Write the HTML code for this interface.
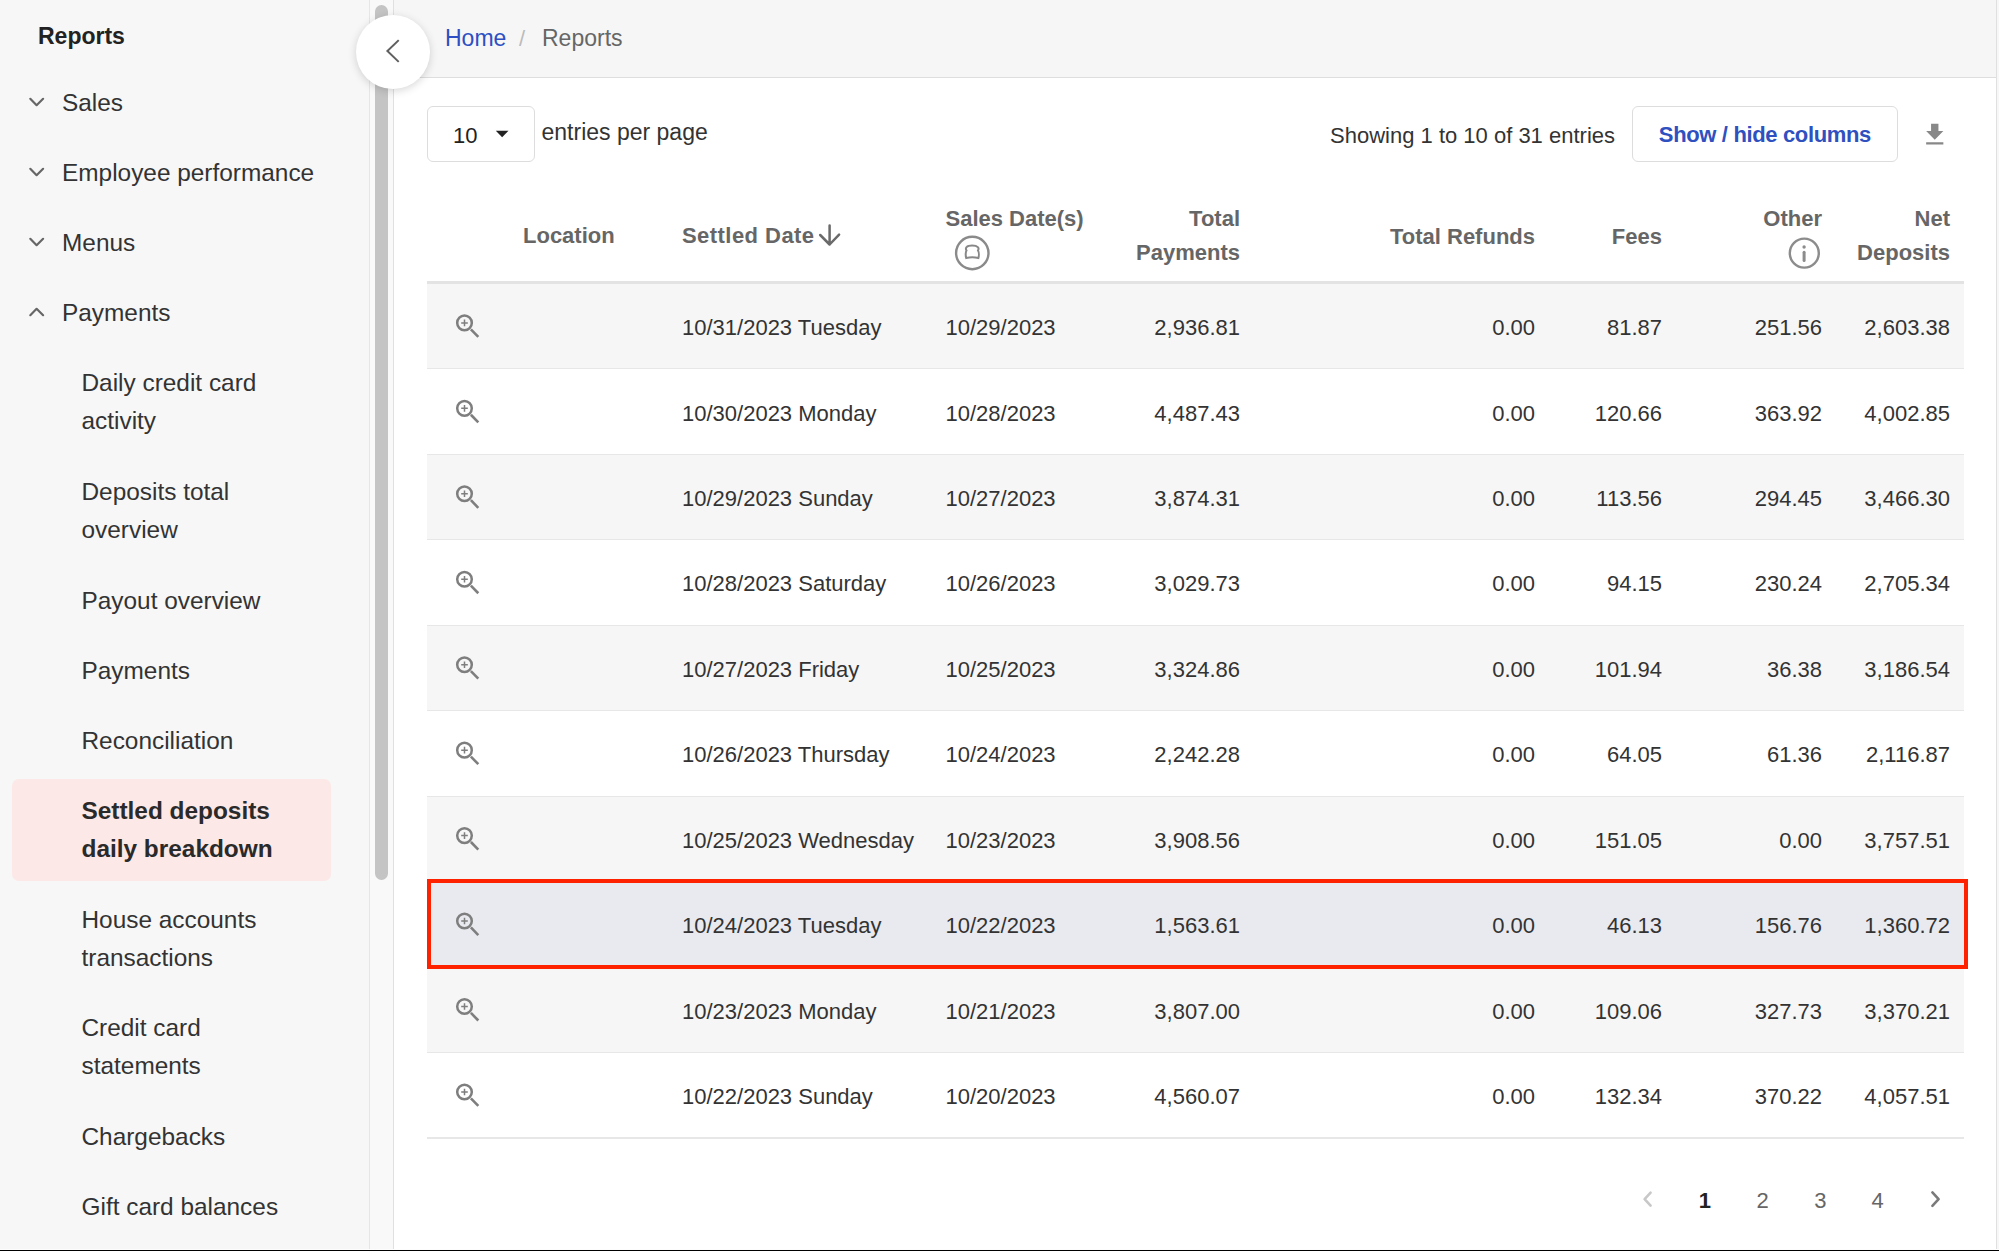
<!DOCTYPE html>
<html><head><meta charset="utf-8"><title>Reports</title>
<style>
html,body{margin:0;padding:0;}
body{width:1999px;height:1251px;position:relative;overflow:hidden;background:#fff;font-family:"Liberation Sans",sans-serif;}
.t{position:absolute;white-space:nowrap;}
.r{position:absolute;display:block;}
</style></head><body>
<div class="r" style="left:0px;top:0px;width:369px;height:1251px;background:#f7f7f7;"></div>
<div class="r" style="left:369px;top:0px;width:1px;height:1251px;background:#e6e6e6;"></div>
<div class="r" style="left:370px;top:0px;width:23px;height:1251px;background:#f9f9f9;"></div>
<div class="r" style="left:375px;top:5px;width:13px;height:875px;background:#c4c4c4;border-radius:6.5px;"></div>
<div class="r" style="left:393px;top:0px;width:1px;height:1251px;background:#e0e0e0;"></div>
<div class="t" style="top:20.03px;font-size:23px;line-height:32px;font-weight:700;color:#222;left:38px;">Reports</div>
<div class="t" style="top:85.55px;font-size:24.4px;line-height:34px;font-weight:400;color:#333;left:62px;">Sales</div>
<svg class="r" style="left:0;top:82px" width="60" height="40" viewBox="0 82 60 40"><path d="M30.3 98.8 L36.6 105.2 L43.1 98.8" fill="none" stroke="#666" stroke-width="2.2" stroke-linecap="round" stroke-linejoin="round"/></svg>
<div class="t" style="top:155.55px;font-size:24.4px;line-height:34px;font-weight:400;color:#333;left:62px;">Employee performance</div>
<svg class="r" style="left:0;top:152px" width="60" height="40" viewBox="0 152 60 40"><path d="M30.3 168.8 L36.6 175.2 L43.1 168.8" fill="none" stroke="#666" stroke-width="2.2" stroke-linecap="round" stroke-linejoin="round"/></svg>
<div class="t" style="top:225.55px;font-size:24.4px;line-height:34px;font-weight:400;color:#333;left:62px;">Menus</div>
<svg class="r" style="left:0;top:222px" width="60" height="40" viewBox="0 222 60 40"><path d="M30.3 238.8 L36.6 245.2 L43.1 238.8" fill="none" stroke="#666" stroke-width="2.2" stroke-linecap="round" stroke-linejoin="round"/></svg>
<div class="t" style="top:295.55px;font-size:24.4px;line-height:34px;font-weight:400;color:#333;left:62px;">Payments</div>
<svg class="r" style="left:0;top:292px" width="60" height="40" viewBox="0 292 60 40"><path d="M30.3 315.2 L36.6 308.8 L43.1 315.2" fill="none" stroke="#666" stroke-width="2.2" stroke-linecap="round" stroke-linejoin="round"/></svg>
<div class="r" style="left:11.5px;top:779px;width:319.5px;height:102px;background:#fce8e6;border-radius:7px;"></div>
<div class="t" style="top:365.55px;font-size:24.4px;line-height:34px;font-weight:400;color:#333;left:81.5px;">Daily credit card</div>
<div class="t" style="top:403.55px;font-size:24.4px;line-height:34px;font-weight:400;color:#333;left:81.5px;">activity</div>
<div class="t" style="top:474.55px;font-size:24.4px;line-height:34px;font-weight:400;color:#333;left:81.5px;">Deposits total</div>
<div class="t" style="top:512.55px;font-size:24.4px;line-height:34px;font-weight:400;color:#333;left:81.5px;">overview</div>
<div class="t" style="top:583.55px;font-size:24.4px;line-height:34px;font-weight:400;color:#333;left:81.5px;">Payout overview</div>
<div class="t" style="top:653.55px;font-size:24.4px;line-height:34px;font-weight:400;color:#333;left:81.5px;">Payments</div>
<div class="t" style="top:723.55px;font-size:24.4px;line-height:34px;font-weight:400;color:#333;left:81.5px;">Reconciliation</div>
<div class="t" style="top:793.55px;font-size:24.4px;line-height:34px;font-weight:700;color:#2a2a2a;left:81.5px;">Settled deposits</div>
<div class="t" style="top:831.55px;font-size:24.4px;line-height:34px;font-weight:700;color:#2a2a2a;left:81.5px;">daily breakdown</div>
<div class="t" style="top:902.55px;font-size:24.4px;line-height:34px;font-weight:400;color:#333;left:81.5px;">House accounts</div>
<div class="t" style="top:940.55px;font-size:24.4px;line-height:34px;font-weight:400;color:#333;left:81.5px;">transactions</div>
<div class="t" style="top:1010.55px;font-size:24.4px;line-height:34px;font-weight:400;color:#333;left:81.5px;">Credit card</div>
<div class="t" style="top:1048.55px;font-size:24.4px;line-height:34px;font-weight:400;color:#333;left:81.5px;">statements</div>
<div class="t" style="top:1119.55px;font-size:24.4px;line-height:34px;font-weight:400;color:#333;left:81.5px;">Chargebacks</div>
<div class="t" style="top:1189.55px;font-size:24.4px;line-height:34px;font-weight:400;color:#333;left:81.5px;">Gift card balances</div>
<div class="r" style="left:394px;top:0px;width:1602px;height:77px;background:#f6f6f6;"></div>
<div class="r" style="left:394px;top:77px;width:1602px;height:1px;background:#dedede;"></div>
<div class="r" style="left:1996px;top:0px;width:1px;height:1251px;background:#e0e0e0;"></div>
<div class="r" style="left:1997px;top:0px;width:2px;height:1251px;background:#f7f7f7;"></div>
<div class="t" style="top:21.73px;font-size:23px;line-height:32px;font-weight:400;color:#2d4fc3;left:445px;">Home</div>
<div class="t" style="top:22.88px;font-size:22px;line-height:31px;font-weight:400;color:#bbbbbb;left:519px;">/</div>
<div class="t" style="top:21.73px;font-size:23px;line-height:32px;font-weight:400;color:#666;left:542px;">Reports</div>
<div class="r" style="left:355.5px;top:14.5px;width:74px;height:74px;background:#fff;border-radius:50%;box-shadow:0 2px 8px rgba(0,0,0,0.16);"></div>
<svg class="r" style="left:355px;top:14px" width="76" height="76" viewBox="355 14 76 76"><path d="M398 40.8 L387.4 51 L398 61.2" fill="none" stroke="#606060" stroke-width="2" stroke-linecap="square"/></svg>
<div class="r" style="left:427px;top:106px;width:108px;height:56px;background:#fff;box-sizing:border-box;border:1.5px solid #dddddd;border-radius:6px;"></div>
<div class="t" style="top:119.88px;font-size:22px;line-height:31px;font-weight:400;color:#222;left:453px;">10</div>
<svg class="r" style="left:494px;top:129px" width="16" height="10" viewBox="494 129 16 10"><path d="M495.8 130.7 L508.5 130.7 L502.15 137.3 Z" fill="#222"/></svg>
<div class="t" style="top:116.03px;font-size:23px;line-height:32px;font-weight:400;color:#333;left:541.5px;">entries per page</div>
<div class="t" style="top:119.88px;font-size:22px;line-height:31px;font-weight:400;color:#333;right:384px;text-align:right;">Showing 1 to 10 of 31 entries</div>
<div class="r" style="left:1632px;top:106px;width:266px;height:56px;background:#fff;box-sizing:border-box;border:1.5px solid #dddddd;border-radius:6px;"></div>
<div class="t" style="top:119.38px;font-size:22px;line-height:31px;font-weight:700;color:#2f50bf;letter-spacing:-0.35px;right:128px;text-align:right;">Show / hide columns</div>
<svg class="r" style="left:1920.3px;top:119.9px" width="29.5" height="29.5" viewBox="0 0 24 24"><path d="M19 9h-4V3H9v6H5l7 7 7-7zM5 18v2h14v-2H5z" fill="#888"/></svg>
<div class="t" style="top:220.18px;font-size:22px;line-height:31px;font-weight:700;color:#666;left:523px;">Location</div>
<div class="t" style="top:220.18px;font-size:22px;line-height:31px;font-weight:700;color:#666;letter-spacing:0.45px;left:682px;">Settled Date</div>
<svg class="r" style="left:815px;top:220px" width="30" height="30" viewBox="815 220 30 30"><path d="M829.6 225.5 V244 M820.2 235 L829.6 244.5 L839.1 234.7" fill="none" stroke="#6a6a6a" stroke-width="2.5" stroke-linecap="round" stroke-linejoin="round"/></svg>
<div class="t" style="top:203.38px;font-size:22px;line-height:31px;font-weight:700;color:#666;left:945.5px;">Sales Date(s)</div>
<svg class="r" style="left:950px;top:231px" width="45" height="45" viewBox="950 231 45 45"><circle cx="972.3" cy="253" r="16.2" fill="none" stroke="#8a8a8a" stroke-width="2.4"/><path d="M966.5 250.5 C965 248 966.3 245.6 972.2 245.6 C978.1 245.6 979.4 248 978 250.5 C979 252 979 256 978.4 258 C975 257.3 969.5 257.3 966.2 258 C965.5 256 965.5 252 966.5 250.5 Z" fill="none" stroke="#888" stroke-width="2"/></svg>
<div class="t" style="top:203.38px;font-size:22px;line-height:31px;font-weight:700;color:#666;right:759px;text-align:right;">Total</div>
<div class="t" style="top:236.88px;font-size:22px;line-height:31px;font-weight:700;color:#666;right:759px;text-align:right;">Payments</div>
<div class="t" style="top:220.68px;font-size:22px;line-height:31px;font-weight:700;color:#666;right:464px;text-align:right;">Total Refunds</div>
<div class="t" style="top:220.68px;font-size:22px;line-height:31px;font-weight:700;color:#666;right:337px;text-align:right;">Fees</div>
<div class="t" style="top:202.98px;font-size:22px;line-height:31px;font-weight:700;color:#666;right:177px;text-align:right;">Other</div>
<svg class="r" style="left:1786px;top:235px" width="36" height="36" viewBox="1786 235 36 36"><circle cx="1804.3" cy="253.1" r="14.5" fill="none" stroke="#8c8c8c" stroke-width="2.4"/><circle cx="1804.1" cy="247" r="1.7" fill="#8c8c8c"/><path d="M1804.1 252.3 V260.6" stroke="#8c8c8c" stroke-width="3" stroke-linecap="round"/></svg>
<div class="t" style="top:202.98px;font-size:22px;line-height:31px;font-weight:700;color:#666;right:49px;text-align:right;">Net</div>
<div class="t" style="top:237.48px;font-size:22px;line-height:31px;font-weight:700;color:#666;right:49px;text-align:right;">Deposits</div>
<div class="r" style="left:427px;top:281px;width:1537px;height:3px;background:#e3e3e3;"></div>
<div class="r" style="left:427px;top:284px;width:1537px;height:84px;background:#f6f6f6;"></div>
<div class="r" style="left:427px;top:367.5px;width:1537px;height:2px;background:#e7e7e7;"></div>
<svg class="r" style="left:450px;top:304px" width="36" height="40" viewBox="450 304 36 40"><circle cx="464.5" cy="322.90" r="7.3" fill="none" stroke="#7e7e7e" stroke-width="2.5"/><path d="M461.2 322.90 H467.8 M464.5 319.60 V326.20" stroke="#7e7e7e" stroke-width="1.5"/><path d="M470.9 329.30 L478.3 336.90" stroke="#7e7e7e" stroke-width="2.6"/></svg>
<div class="t" style="top:312.08px;font-size:22px;line-height:31px;font-weight:400;color:#333;left:682px;">10/31/2023 Tuesday</div>
<div class="t" style="top:312.08px;font-size:22px;line-height:31px;font-weight:400;color:#333;left:945.5px;">10/29/2023</div>
<div class="t" style="top:312.08px;font-size:22px;line-height:31px;font-weight:400;color:#333;right:759px;text-align:right;">2,936.81</div>
<div class="t" style="top:312.08px;font-size:22px;line-height:31px;font-weight:400;color:#333;right:464px;text-align:right;">0.00</div>
<div class="t" style="top:312.08px;font-size:22px;line-height:31px;font-weight:400;color:#333;right:337px;text-align:right;">81.87</div>
<div class="t" style="top:312.08px;font-size:22px;line-height:31px;font-weight:400;color:#333;right:177px;text-align:right;">251.56</div>
<div class="t" style="top:312.08px;font-size:22px;line-height:31px;font-weight:400;color:#333;right:49px;text-align:right;">2,603.38</div>
<div class="r" style="left:427px;top:369px;width:1537px;height:85px;background:#ffffff;"></div>
<div class="r" style="left:427px;top:453.5px;width:1537px;height:2px;background:#e7e7e7;"></div>
<svg class="r" style="left:450px;top:389px" width="36" height="40" viewBox="450 389 36 40"><circle cx="464.5" cy="408.35" r="7.3" fill="none" stroke="#7e7e7e" stroke-width="2.5"/><path d="M461.2 408.35 H467.8 M464.5 405.05 V411.65" stroke="#7e7e7e" stroke-width="1.5"/><path d="M470.9 414.75 L478.3 422.35" stroke="#7e7e7e" stroke-width="2.6"/></svg>
<div class="t" style="top:397.53px;font-size:22px;line-height:31px;font-weight:400;color:#333;left:682px;">10/30/2023 Monday</div>
<div class="t" style="top:397.53px;font-size:22px;line-height:31px;font-weight:400;color:#333;left:945.5px;">10/28/2023</div>
<div class="t" style="top:397.53px;font-size:22px;line-height:31px;font-weight:400;color:#333;right:759px;text-align:right;">4,487.43</div>
<div class="t" style="top:397.53px;font-size:22px;line-height:31px;font-weight:400;color:#333;right:464px;text-align:right;">0.00</div>
<div class="t" style="top:397.53px;font-size:22px;line-height:31px;font-weight:400;color:#333;right:337px;text-align:right;">120.66</div>
<div class="t" style="top:397.53px;font-size:22px;line-height:31px;font-weight:400;color:#333;right:177px;text-align:right;">363.92</div>
<div class="t" style="top:397.53px;font-size:22px;line-height:31px;font-weight:400;color:#333;right:49px;text-align:right;">4,002.85</div>
<div class="r" style="left:427px;top:455px;width:1537px;height:84px;background:#f6f6f6;"></div>
<div class="r" style="left:427px;top:538.5px;width:1537px;height:2px;background:#e7e7e7;"></div>
<svg class="r" style="left:450px;top:475px" width="36" height="40" viewBox="450 475 36 40"><circle cx="464.5" cy="493.80" r="7.3" fill="none" stroke="#7e7e7e" stroke-width="2.5"/><path d="M461.2 493.80 H467.8 M464.5 490.50 V497.10" stroke="#7e7e7e" stroke-width="1.5"/><path d="M470.9 500.20 L478.3 507.80" stroke="#7e7e7e" stroke-width="2.6"/></svg>
<div class="t" style="top:482.98px;font-size:22px;line-height:31px;font-weight:400;color:#333;left:682px;">10/29/2023 Sunday</div>
<div class="t" style="top:482.98px;font-size:22px;line-height:31px;font-weight:400;color:#333;left:945.5px;">10/27/2023</div>
<div class="t" style="top:482.98px;font-size:22px;line-height:31px;font-weight:400;color:#333;right:759px;text-align:right;">3,874.31</div>
<div class="t" style="top:482.98px;font-size:22px;line-height:31px;font-weight:400;color:#333;right:464px;text-align:right;">0.00</div>
<div class="t" style="top:482.98px;font-size:22px;line-height:31px;font-weight:400;color:#333;right:337px;text-align:right;">113.56</div>
<div class="t" style="top:482.98px;font-size:22px;line-height:31px;font-weight:400;color:#333;right:177px;text-align:right;">294.45</div>
<div class="t" style="top:482.98px;font-size:22px;line-height:31px;font-weight:400;color:#333;right:49px;text-align:right;">3,466.30</div>
<div class="r" style="left:427px;top:540px;width:1537px;height:85px;background:#ffffff;"></div>
<div class="r" style="left:427px;top:624.5px;width:1537px;height:2px;background:#e7e7e7;"></div>
<svg class="r" style="left:450px;top:560px" width="36" height="40" viewBox="450 560 36 40"><circle cx="464.5" cy="579.25" r="7.3" fill="none" stroke="#7e7e7e" stroke-width="2.5"/><path d="M461.2 579.25 H467.8 M464.5 575.95 V582.55" stroke="#7e7e7e" stroke-width="1.5"/><path d="M470.9 585.65 L478.3 593.25" stroke="#7e7e7e" stroke-width="2.6"/></svg>
<div class="t" style="top:568.43px;font-size:22px;line-height:31px;font-weight:400;color:#333;left:682px;">10/28/2023 Saturday</div>
<div class="t" style="top:568.43px;font-size:22px;line-height:31px;font-weight:400;color:#333;left:945.5px;">10/26/2023</div>
<div class="t" style="top:568.43px;font-size:22px;line-height:31px;font-weight:400;color:#333;right:759px;text-align:right;">3,029.73</div>
<div class="t" style="top:568.43px;font-size:22px;line-height:31px;font-weight:400;color:#333;right:464px;text-align:right;">0.00</div>
<div class="t" style="top:568.43px;font-size:22px;line-height:31px;font-weight:400;color:#333;right:337px;text-align:right;">94.15</div>
<div class="t" style="top:568.43px;font-size:22px;line-height:31px;font-weight:400;color:#333;right:177px;text-align:right;">230.24</div>
<div class="t" style="top:568.43px;font-size:22px;line-height:31px;font-weight:400;color:#333;right:49px;text-align:right;">2,705.34</div>
<div class="r" style="left:427px;top:626px;width:1537px;height:84px;background:#f6f6f6;"></div>
<div class="r" style="left:427px;top:709.5px;width:1537px;height:2px;background:#e7e7e7;"></div>
<svg class="r" style="left:450px;top:646px" width="36" height="40" viewBox="450 646 36 40"><circle cx="464.5" cy="664.70" r="7.3" fill="none" stroke="#7e7e7e" stroke-width="2.5"/><path d="M461.2 664.70 H467.8 M464.5 661.40 V668.00" stroke="#7e7e7e" stroke-width="1.5"/><path d="M470.9 671.10 L478.3 678.70" stroke="#7e7e7e" stroke-width="2.6"/></svg>
<div class="t" style="top:653.88px;font-size:22px;line-height:31px;font-weight:400;color:#333;left:682px;">10/27/2023 Friday</div>
<div class="t" style="top:653.88px;font-size:22px;line-height:31px;font-weight:400;color:#333;left:945.5px;">10/25/2023</div>
<div class="t" style="top:653.88px;font-size:22px;line-height:31px;font-weight:400;color:#333;right:759px;text-align:right;">3,324.86</div>
<div class="t" style="top:653.88px;font-size:22px;line-height:31px;font-weight:400;color:#333;right:464px;text-align:right;">0.00</div>
<div class="t" style="top:653.88px;font-size:22px;line-height:31px;font-weight:400;color:#333;right:337px;text-align:right;">101.94</div>
<div class="t" style="top:653.88px;font-size:22px;line-height:31px;font-weight:400;color:#333;right:177px;text-align:right;">36.38</div>
<div class="t" style="top:653.88px;font-size:22px;line-height:31px;font-weight:400;color:#333;right:49px;text-align:right;">3,186.54</div>
<div class="r" style="left:427px;top:711px;width:1537px;height:85px;background:#ffffff;"></div>
<div class="r" style="left:427px;top:795.5px;width:1537px;height:2px;background:#e7e7e7;"></div>
<svg class="r" style="left:450px;top:731px" width="36" height="40" viewBox="450 731 36 40"><circle cx="464.5" cy="750.15" r="7.3" fill="none" stroke="#7e7e7e" stroke-width="2.5"/><path d="M461.2 750.15 H467.8 M464.5 746.85 V753.45" stroke="#7e7e7e" stroke-width="1.5"/><path d="M470.9 756.55 L478.3 764.15" stroke="#7e7e7e" stroke-width="2.6"/></svg>
<div class="t" style="top:739.33px;font-size:22px;line-height:31px;font-weight:400;color:#333;left:682px;">10/26/2023 Thursday</div>
<div class="t" style="top:739.33px;font-size:22px;line-height:31px;font-weight:400;color:#333;left:945.5px;">10/24/2023</div>
<div class="t" style="top:739.33px;font-size:22px;line-height:31px;font-weight:400;color:#333;right:759px;text-align:right;">2,242.28</div>
<div class="t" style="top:739.33px;font-size:22px;line-height:31px;font-weight:400;color:#333;right:464px;text-align:right;">0.00</div>
<div class="t" style="top:739.33px;font-size:22px;line-height:31px;font-weight:400;color:#333;right:337px;text-align:right;">64.05</div>
<div class="t" style="top:739.33px;font-size:22px;line-height:31px;font-weight:400;color:#333;right:177px;text-align:right;">61.36</div>
<div class="t" style="top:739.33px;font-size:22px;line-height:31px;font-weight:400;color:#333;right:49px;text-align:right;">2,116.87</div>
<div class="r" style="left:427px;top:797px;width:1537px;height:84px;background:#f6f6f6;"></div>
<div class="r" style="left:427px;top:880.5px;width:1537px;height:2px;background:#e7e7e7;"></div>
<svg class="r" style="left:450px;top:817px" width="36" height="40" viewBox="450 817 36 40"><circle cx="464.5" cy="835.60" r="7.3" fill="none" stroke="#7e7e7e" stroke-width="2.5"/><path d="M461.2 835.60 H467.8 M464.5 832.30 V838.90" stroke="#7e7e7e" stroke-width="1.5"/><path d="M470.9 842.00 L478.3 849.60" stroke="#7e7e7e" stroke-width="2.6"/></svg>
<div class="t" style="top:824.78px;font-size:22px;line-height:31px;font-weight:400;color:#333;left:682px;">10/25/2023 Wednesday</div>
<div class="t" style="top:824.78px;font-size:22px;line-height:31px;font-weight:400;color:#333;left:945.5px;">10/23/2023</div>
<div class="t" style="top:824.78px;font-size:22px;line-height:31px;font-weight:400;color:#333;right:759px;text-align:right;">3,908.56</div>
<div class="t" style="top:824.78px;font-size:22px;line-height:31px;font-weight:400;color:#333;right:464px;text-align:right;">0.00</div>
<div class="t" style="top:824.78px;font-size:22px;line-height:31px;font-weight:400;color:#333;right:337px;text-align:right;">151.05</div>
<div class="t" style="top:824.78px;font-size:22px;line-height:31px;font-weight:400;color:#333;right:177px;text-align:right;">0.00</div>
<div class="t" style="top:824.78px;font-size:22px;line-height:31px;font-weight:400;color:#333;right:49px;text-align:right;">3,757.51</div>
<div class="r" style="left:427px;top:882px;width:1537px;height:85px;background:#e9eaef;"></div>
<div class="r" style="left:427px;top:966.5px;width:1537px;height:2px;background:#e7e7e7;"></div>
<svg class="r" style="left:450px;top:902px" width="36" height="40" viewBox="450 902 36 40"><circle cx="464.5" cy="921.05" r="7.3" fill="none" stroke="#7e7e7e" stroke-width="2.5"/><path d="M461.2 921.05 H467.8 M464.5 917.75 V924.35" stroke="#7e7e7e" stroke-width="1.5"/><path d="M470.9 927.45 L478.3 935.05" stroke="#7e7e7e" stroke-width="2.6"/></svg>
<div class="t" style="top:910.23px;font-size:22px;line-height:31px;font-weight:400;color:#333;left:682px;">10/24/2023 Tuesday</div>
<div class="t" style="top:910.23px;font-size:22px;line-height:31px;font-weight:400;color:#333;left:945.5px;">10/22/2023</div>
<div class="t" style="top:910.23px;font-size:22px;line-height:31px;font-weight:400;color:#333;right:759px;text-align:right;">1,563.61</div>
<div class="t" style="top:910.23px;font-size:22px;line-height:31px;font-weight:400;color:#333;right:464px;text-align:right;">0.00</div>
<div class="t" style="top:910.23px;font-size:22px;line-height:31px;font-weight:400;color:#333;right:337px;text-align:right;">46.13</div>
<div class="t" style="top:910.23px;font-size:22px;line-height:31px;font-weight:400;color:#333;right:177px;text-align:right;">156.76</div>
<div class="t" style="top:910.23px;font-size:22px;line-height:31px;font-weight:400;color:#333;right:49px;text-align:right;">1,360.72</div>
<div class="r" style="left:427px;top:968px;width:1537px;height:84px;background:#f6f6f6;"></div>
<div class="r" style="left:427px;top:1051.5px;width:1537px;height:2px;background:#e7e7e7;"></div>
<svg class="r" style="left:450px;top:988px" width="36" height="40" viewBox="450 988 36 40"><circle cx="464.5" cy="1006.50" r="7.3" fill="none" stroke="#7e7e7e" stroke-width="2.5"/><path d="M461.2 1006.50 H467.8 M464.5 1003.20 V1009.80" stroke="#7e7e7e" stroke-width="1.5"/><path d="M470.9 1012.90 L478.3 1020.50" stroke="#7e7e7e" stroke-width="2.6"/></svg>
<div class="t" style="top:995.68px;font-size:22px;line-height:31px;font-weight:400;color:#333;left:682px;">10/23/2023 Monday</div>
<div class="t" style="top:995.68px;font-size:22px;line-height:31px;font-weight:400;color:#333;left:945.5px;">10/21/2023</div>
<div class="t" style="top:995.68px;font-size:22px;line-height:31px;font-weight:400;color:#333;right:759px;text-align:right;">3,807.00</div>
<div class="t" style="top:995.68px;font-size:22px;line-height:31px;font-weight:400;color:#333;right:464px;text-align:right;">0.00</div>
<div class="t" style="top:995.68px;font-size:22px;line-height:31px;font-weight:400;color:#333;right:337px;text-align:right;">109.06</div>
<div class="t" style="top:995.68px;font-size:22px;line-height:31px;font-weight:400;color:#333;right:177px;text-align:right;">327.73</div>
<div class="t" style="top:995.68px;font-size:22px;line-height:31px;font-weight:400;color:#333;right:49px;text-align:right;">3,370.21</div>
<div class="r" style="left:427px;top:1053px;width:1537px;height:84px;background:#ffffff;"></div>
<div class="r" style="left:427px;top:1136.5px;width:1537px;height:2px;background:#e7e7e7;"></div>
<svg class="r" style="left:450px;top:1073px" width="36" height="40" viewBox="450 1073 36 40"><circle cx="464.5" cy="1091.95" r="7.3" fill="none" stroke="#7e7e7e" stroke-width="2.5"/><path d="M461.2 1091.95 H467.8 M464.5 1088.65 V1095.25" stroke="#7e7e7e" stroke-width="1.5"/><path d="M470.9 1098.35 L478.3 1105.95" stroke="#7e7e7e" stroke-width="2.6"/></svg>
<div class="t" style="top:1081.13px;font-size:22px;line-height:31px;font-weight:400;color:#333;left:682px;">10/22/2023 Sunday</div>
<div class="t" style="top:1081.13px;font-size:22px;line-height:31px;font-weight:400;color:#333;left:945.5px;">10/20/2023</div>
<div class="t" style="top:1081.13px;font-size:22px;line-height:31px;font-weight:400;color:#333;right:759px;text-align:right;">4,560.07</div>
<div class="t" style="top:1081.13px;font-size:22px;line-height:31px;font-weight:400;color:#333;right:464px;text-align:right;">0.00</div>
<div class="t" style="top:1081.13px;font-size:22px;line-height:31px;font-weight:400;color:#333;right:337px;text-align:right;">132.34</div>
<div class="t" style="top:1081.13px;font-size:22px;line-height:31px;font-weight:400;color:#333;right:177px;text-align:right;">370.22</div>
<div class="t" style="top:1081.13px;font-size:22px;line-height:31px;font-weight:400;color:#333;right:49px;text-align:right;">4,057.51</div>
<div class="r" style="left:426.5px;top:879px;width:1541px;height:89.5px;background:transparent;box-sizing:border-box;border:4px solid #ff2200;"></div>
<svg class="r" style="left:1638px;top:1186px" width="20" height="26" viewBox="1638 1186 20 26"><path d="M1650.6 1192.7 L1644.6 1199.2 L1650.6 1205.6" fill="none" stroke="#c8c8c8" stroke-width="2.6" stroke-linecap="round" stroke-linejoin="round"/></svg>
<svg class="r" style="left:1926px;top:1186px" width="20" height="26" viewBox="1926 1186 20 26"><path d="M1932.4 1192.4 L1938.6 1199.2 L1932.4 1205.9" fill="none" stroke="#7a7a7a" stroke-width="2.6" stroke-linecap="round" stroke-linejoin="round"/></svg>
<div class="t" style="top:1184.68px;font-size:22px;line-height:31px;font-weight:700;color:#222;left:1704.8px;transform:translateX(-50%);">1</div>
<div class="t" style="top:1184.68px;font-size:22px;line-height:31px;font-weight:400;color:#666;left:1762.7px;transform:translateX(-50%);">2</div>
<div class="t" style="top:1184.68px;font-size:22px;line-height:31px;font-weight:400;color:#666;left:1820.3px;transform:translateX(-50%);">3</div>
<div class="t" style="top:1184.68px;font-size:22px;line-height:31px;font-weight:400;color:#666;left:1877.5px;transform:translateX(-50%);">4</div>
<div class="r" style="left:0px;top:1249px;width:1999px;height:1px;background:#fdfdfd;"></div>
<div class="r" style="left:0px;top:1250px;width:1999px;height:1px;background:#000;"></div>
</body></html>
